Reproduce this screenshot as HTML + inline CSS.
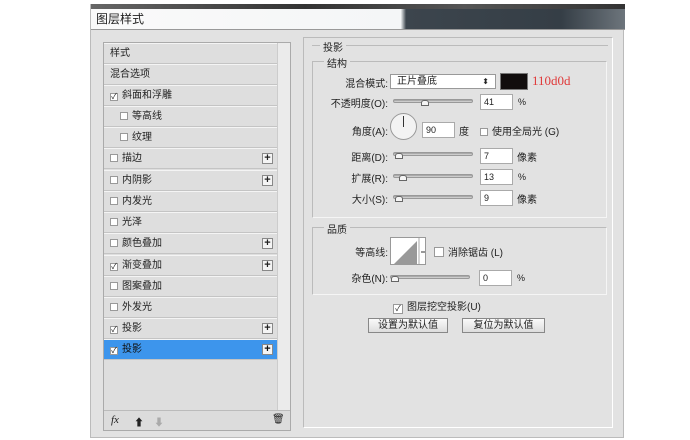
<!DOCTYPE html>
<html><head><meta charset="utf-8"><style>
*{box-sizing:border-box;margin:0;padding:0}
body{width:690px;height:440px;background:#fff;position:relative;overflow:hidden;font-family:"Liberation Sans","Noto Sans CJK SC",sans-serif;font-size:10px;color:#222}
.a{position:absolute}
#dlg{left:90px;top:4px;width:534px;height:434px;background:#e2e2e2;border:1px solid #bbb;border-top:none}
#tb{left:0;top:0;width:534px;height:26px;background:linear-gradient(90deg,#fafafa 0%,#f4f6f7 58%,#3c454d 59%,#353e46 88%,#6d757c 100%);border-bottom:1px solid #999}
#tb2{left:0;top:0;width:534px;height:5px;background:linear-gradient(90deg,#666 0%,#333 40%,#555 70%,#333 100%)}
.row{position:absolute;left:0;width:173px;height:21px;border-bottom:1px solid #c4c4c4;border-top:1px solid #f4f4f4;line-height:19px;padding-left:6px;font-size:10px}
.cb{display:inline-block;width:8px;height:8px;border:1px solid #999;background:#fff;margin-right:4px;vertical-align:-1px;font-size:8px;line-height:6px;text-align:center}
.plus{position:absolute;right:4px;top:4px;width:11px;height:11px;border:1px solid #888;background:#f4f4f4;font-size:11px;line-height:8px;text-align:center;font-weight:bold}
.lbl{position:absolute;text-align:right;font-size:10px}
.inp{position:absolute;width:33px;height:16px;background:#fff;border:1px solid #aaa;font-size:9px;padding:2px 3px}
.sl{position:absolute;width:80px;height:4px;border-radius:2px;background:linear-gradient(#999,#ddd);border:1px solid #999}
.th{position:absolute;width:8px;height:6px;border:1px solid #666;background:#f5f5f5;border-radius:3px 3px 0 0}
.btn{position:absolute;height:15px;border:1px solid #888;background:linear-gradient(#fafafa,#ddd);text-align:center;font-size:10px;line-height:13px}
</style></head><body>
<div id="dlg" class="a">
 <div id="tb" class="a"></div><div id="tb2" class="a"></div>
 <div class="a" style="left:5px;top:6px;font-size:12px;color:#222">图层样式</div>
</div>
<!-- left list -->
<div class="a" style="left:103px;top:42px;width:188px;height:389px;border:1px solid #aaa;background:#dedede">
 <div class="a" style="left:173px;top:0;width:13px;height:368px;background:#ebebeb;border-left:1px solid #ccc"></div>
 <div class="row" style="top:0">样式</div>
 <div class="row" style="top:21px">混合选项</div>
 <div class="row" style="top:42px"><span class="cb">✓</span>斜面和浮雕</div>
 <div class="row" style="top:63px;padding-left:16px"><span class="cb"></span>等高线</div>
 <div class="row" style="top:84px;padding-left:16px"><span class="cb"></span>纹理</div>
 <div class="row" style="top:105px"><span class="cb"></span>描边<span class="plus">+</span></div>
 <div class="row" style="top:127px"><span class="cb"></span>内阴影<span class="plus">+</span></div>
 <div class="row" style="top:148px"><span class="cb"></span>内发光</div>
 <div class="row" style="top:169px"><span class="cb"></span>光泽</div>
 <div class="row" style="top:190px"><span class="cb"></span>颜色叠加<span class="plus">+</span></div>
 <div class="row" style="top:212px"><span class="cb">✓</span>渐变叠加<span class="plus">+</span></div>
 <div class="row" style="top:233px"><span class="cb"></span>图案叠加</div>
 <div class="row" style="top:254px"><span class="cb"></span>外发光</div>
 <div class="row" style="top:275px"><span class="cb">✓</span>投影<span class="plus">+</span></div>
 <div class="row" style="top:296px;background:#3d95ec;color:#111"><span class="cb">✓</span>投影<span class="plus">+</span></div>
 <div class="a" style="left:0;top:367px;width:186px;height:20px;border-top:1px solid #bbb;background:#dcdcdc">
  <span class="a" style="left:7px;top:3px;font-style:italic;font-family:'Liberation Serif';font-size:11px">fx</span>
  <span class="a" style="left:30px;top:3px;font-size:10px">⬆</span>
  <span class="a" style="left:50px;top:3px;font-size:10px;color:#aaa">⬇</span>
  <span class="a" style="left:168px;top:3px;font-size:10px">🗑</span>
 </div>
</div>
<!-- right panel -->
<div class="a" style="left:303px;top:37px;width:310px;height:391px;border:1px solid #bbb;border-right-color:#fff;border-bottom-color:#fff"></div>
<div class="a" style="left:312px;top:45px;width:296px;border-top:1px solid #bbb"></div>
<div class="a" style="left:320px;top:39px;background:#e2e2e2;padding:0 3px;font-size:10px">投影</div>
<div class="a" style="left:312px;top:61px;width:295px;height:157px;border:1px solid #bbb;border-right-color:#f5f5f5;border-bottom-color:#f5f5f5"></div>
<div class="a" style="left:324px;top:55px;background:#e2e2e2;padding:0 3px">结构</div>
<div class="lbl" style="left:330px;top:75px;width:58px">混合模式:</div>
<div class="a" style="left:390px;top:74px;width:106px;height:15px;background:#fff;border:1px solid #999;padding:0 6px;font-size:10px;line-height:13px">正片叠底<span style="float:right;font-size:8px">⬍</span></div>
<div class="a" style="left:500px;top:73px;width:28px;height:17px;background:#110d0d;border:1px solid #777"></div>
<div class="a" style="left:532px;top:73px;color:#e03a3a;font-family:'Liberation Serif';font-size:13px">110d0d</div>
<div class="lbl" style="left:320px;top:95px;width:68px">不透明度(O):</div>
<div class="sl" style="left:393px;top:99px"></div><div class="th" style="left:421px;top:100px"></div>
<div class="inp" style="left:480px;top:94px">41</div><div class="a" style="left:518px;top:97px;font-size:9px">%</div>
<div class="lbl" style="left:330px;top:123px;width:58px">角度(A):</div>
<div class="a" style="left:390px;top:113px;width:27px;height:27px;border-radius:50%;background:#f3f3f3;border:1px solid #999"></div>
<div class="a" style="left:403px;top:116px;width:1px;height:11px;background:#333"></div>
<div class="inp" style="left:422px;top:122px">90</div><div class="a" style="left:459px;top:123px">度</div>
<div class="a" style="left:480px;top:123px"><span class="cb"></span>使用全局光 (G)</div>
<div class="lbl" style="left:330px;top:149px;width:58px">距离(D):</div>
<div class="sl" style="left:393px;top:152px"></div><div class="th" style="left:395px;top:153px"></div>
<div class="inp" style="left:480px;top:148px">7</div><div class="a" style="left:517px;top:149px">像素</div>
<div class="lbl" style="left:330px;top:170px;width:58px">扩展(R):</div>
<div class="sl" style="left:393px;top:174px"></div><div class="th" style="left:399px;top:175px"></div>
<div class="inp" style="left:480px;top:169px">13</div><div class="a" style="left:518px;top:172px;font-size:9px">%</div>
<div class="lbl" style="left:330px;top:191px;width:58px">大小(S):</div>
<div class="sl" style="left:393px;top:195px"></div><div class="th" style="left:395px;top:196px"></div>
<div class="inp" style="left:480px;top:190px">9</div><div class="a" style="left:517px;top:191px">像素</div>
<!-- quality -->
<div class="a" style="left:312px;top:227px;width:295px;height:68px;border:1px solid #bbb;border-right-color:#f5f5f5;border-bottom-color:#f5f5f5"></div>
<div class="a" style="left:324px;top:221px;background:#e2e2e2;padding:0 3px">品质</div>
<div class="lbl" style="left:330px;top:244px;width:58px">等高线:</div>
<div class="a" style="left:390px;top:237px;width:36px;height:28px;border:1px solid #999;background:#fff;overflow:hidden">
 <svg width="36" height="28" style="position:absolute;left:0;top:0"><polygon points="3,26 26,3 26,26" fill="#999"/><line x1="28" y1="0" x2="28" y2="28" stroke="#aaa"/><line x1="30" y1="14" x2="34" y2="14" stroke="#333"/></svg>
</div>
<div class="a" style="left:434px;top:244px"><span class="cb" style="width:10px;height:10px"></span>消除锯齿 (L)</div>
<div class="lbl" style="left:330px;top:270px;width:58px">杂色(N):</div>
<div class="sl" style="left:390px;top:275px"></div><div class="th" style="left:391px;top:276px"></div>
<div class="inp" style="left:479px;top:270px">0</div><div class="a" style="left:517px;top:273px;font-size:9px">%</div>
<div class="a" style="left:393px;top:298px"><span class="cb" style="width:10px;height:10px;line-height:8px">✓</span>图层挖空投影(U)</div>
<div class="btn" style="left:368px;top:318px;width:80px">设置为默认值</div>
<div class="btn" style="left:462px;top:318px;width:83px">复位为默认值</div>
</body></html>
